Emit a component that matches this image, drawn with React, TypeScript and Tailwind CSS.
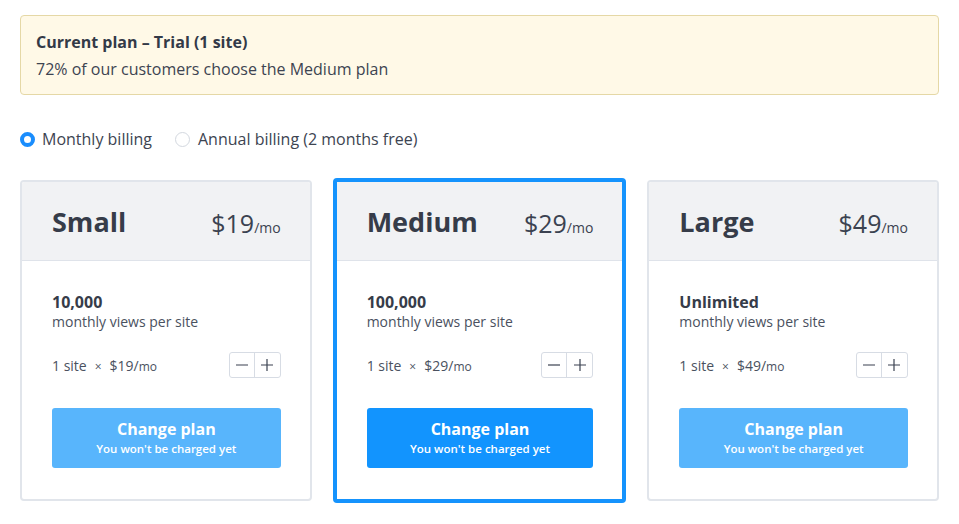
import React from "react";

type Plan = { name: string; price: number; views: string; featured?: boolean };

const plans: Plan[] = [
  { name: "Small", price: 19, views: "10,000" },
  { name: "Medium", price: 29, views: "100,000", featured: true },
  { name: "Large", price: 49, views: "Unlimited" },
];

function Minus() {
  return (
    <svg width="14" height="14" viewBox="0 0 14 14" fill="none">
      <path d="M1 7h12" stroke="#3a4150" strokeWidth="1.2" />
    </svg>
  );
}
function Plus() {
  return (
    <svg width="14" height="14" viewBox="0 0 14 14" fill="none">
      <path d="M1 7h12M7 1v12" stroke="#3a4150" strokeWidth="1.2" />
    </svg>
  );
}

function Card({ plan }: { plan: Plan }) {
  const f = plan.featured;
  return (
    <div
      className={
        f
          ? "bg-white border-[4px] border-[#1593fd] rounded-[4px] -mx-px -my-[2px] overflow-hidden"
          : "bg-white border-2 border-[#e1e5eb] rounded-[4px] overflow-hidden"
      }
    >
      <div className="h-[79px] bg-[#f1f2f4] border-b border-[#dfe3ea] flex items-center justify-between pl-[30px] pr-[29px]">
        <div className="text-[27px] font-bold text-[#363c49] leading-none">{plan.name}</div>
        <div className="flex items-baseline text-[#3b4250] leading-none pt-[4px]">
          <span className="text-[25px]">${plan.price}</span>
          <span className="text-[14px]">/mo</span>
        </div>
      </div>
      <div className="pl-[30px] pr-[29px] pt-[31px] pb-[31px]">
        <div className="text-[16px] font-bold text-[#363c49] leading-[20px]">{plan.views}</div>
        <div className="text-[14px] text-[#4a5160] leading-[20px]">monthly views per site</div>
        <div className="mt-[20px] flex items-center justify-between">
          <div className="text-[14px] text-[#4a5160] flex items-baseline">
            <span>1 site</span>
            <span className="mx-[8px] text-[12px]">×</span>
            <span>${plan.price}/</span>
            <span className="text-[12px]">mo</span>
          </div>
          <div className="flex h-[26px] border border-[#d7dce4] rounded-[3px] bg-white">
            <div className="w-[25px] flex items-center justify-center border-r border-[#d7dce4]">
              <Minus />
            </div>
            <div className="w-[25px] flex items-center justify-center">
              <Plus />
            </div>
          </div>
        </div>
        <button
          className={
            "mt-[30px] w-full h-[60px] rounded-[3px] flex flex-col items-center justify-center text-white " +
            (f ? "bg-[#1294fe]" : "bg-[#58b5fc]")
          }
        >
          <span className="text-[16px] font-bold leading-[22px]">Change plan</span>
          <span className="text-[11.5px] font-semibold leading-[18px]">You won't be charged yet</span>
        </button>
      </div>
    </div>
  );
}

export default function App() {
  return (
    <div
      className="min-h-[524px] bg-white px-[20px] pt-[15px]"
      style={{ fontFamily: '"Open Sans", "Noto Sans", sans-serif' }}
    >
      <div className="border border-[#e5d8a6] bg-[#fff9e7] rounded-[4px] pl-[15px] pt-[15px] pb-[14px]">
        <div className="text-[16px] font-bold text-[#333a47] leading-[22px]">
          Current plan – Trial (1 site)
        </div>
        <div className="text-[16px] text-[#3d4451] leading-[22px] mt-[5px]">
          72% of our customers choose the Medium plan
        </div>
      </div>

      <div className="mt-[33px] flex items-center text-[16px] text-[#3d4451] leading-[22px]">
        <label className="flex items-center">
          <span className="w-[15px] h-[15px] rounded-full border-[4.5px] border-[#1a8dfd] bg-white" />
          <span className="ml-[7px]">Monthly billing</span>
        </label>
        <label className="flex items-center ml-[23px]">
          <span className="w-[15px] h-[15px] rounded-full border border-[#d3d8df] bg-white" />
          <span className="ml-[8px]">Annual billing (2 months free)</span>
        </label>
      </div>

      <div className="mt-[30px] grid grid-cols-3 gap-[22px]">
        {plans.map((p) => (
          <Card key={p.name} plan={p} />
        ))}
      </div>
    </div>
  );
}
